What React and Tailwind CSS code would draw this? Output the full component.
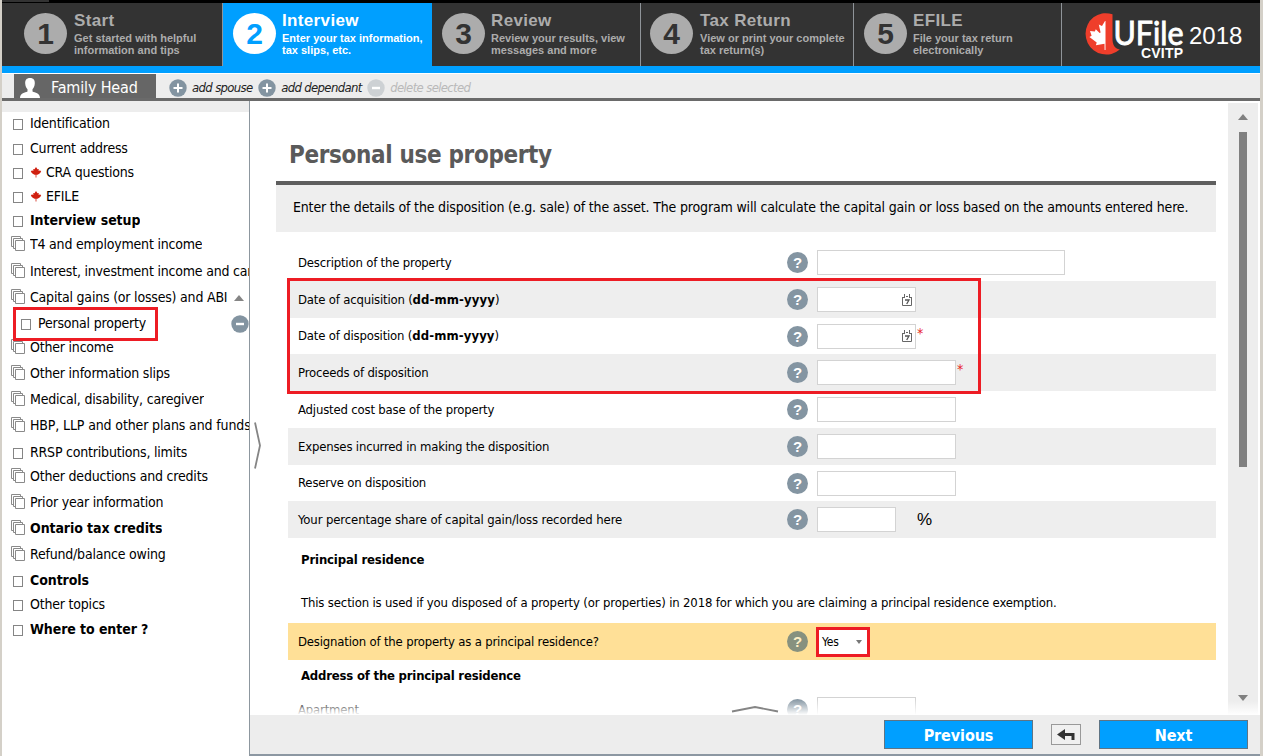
import React from "react";

const TAHOMA = "font-['DejaVu_Sans_Condensed','DejaVu_Sans',sans-serif] [font-stretch:condensed]";
const ARIAL = "font-['Liberation_Sans',Arial,sans-serif]";

const steps = [
  { n: "1", title: "Start", lines: ["Get started with helpful", "information and tips"], box: "w-[221px] pl-[22px] border-r border-[#8f9499]", gap: "ml-[7px]" },
  { n: "2", title: "Interview", lines: ["Enter your tax information,", "tax slips, etc."], box: "w-[209px] pl-[10px]", gap: "ml-[6px]", active: true },
  { n: "3", title: "Review", lines: ["Review your results, view", "messages and more"], box: "w-[209px] pl-[10px] border-r border-[#8f9499]", gap: "ml-[6px]" },
  { n: "4", title: "Tax Return", lines: ["View or print your complete", "tax return(s)"], box: "w-[213px] pl-[9px] border-r border-[#8f9499]", gap: "ml-[7px]" },
  { n: "5", title: "EFILE", lines: ["File your tax return", "electronically"], box: "w-[208px] pl-[10px] border-r border-[#8f9499]", gap: "ml-[6px]" },
];

function Step({ n, title, lines, box, gap, active }) {
  return (
    <div className={`flex h-[63px] shrink-0 ${box} ${active ? "bg-[#009fff] text-white" : "bg-[#333] text-[#acacac]"}`}>
      <div className={`mt-[10px] flex h-[41px] w-[43px] shrink-0 items-center justify-center rounded-[50%] text-[30px] leading-none font-bold ${active ? "bg-white text-[#009fff]" : "bg-[#acacac] text-[#333]"}`}>
        {n}
      </div>
      <div className={`pt-[8px] whitespace-nowrap font-bold ${gap}`}>
        <div className="text-[17px] leading-[20px] tracking-[0.35px]">{title}</div>
        <div className="pt-[1px] text-[11px] leading-[12px]">
          {lines.map((l) => <div key={l}>{l}</div>)}
        </div>
      </div>
    </div>
  );
}

function Logo() {
  return (
    <svg width="190" height="63" viewBox="1065 3 190 63" className="ml-[3px] block">
      <path d="M1112.500 14.200C1109 13 1105 13 1102 13.400A20.800 20.800 0 1 0 1119.800 49.600C1114.500 48.500 1112.500 44.500 1112.500 39Z" fill="#ef3e2b" />
      <path d="M1105 21l-3 5-3.200-1.400 1.800 7.800-1 .5-3.800-3.600-1 2.300-4.800-.7 1.600 4.800-2.200 1.300 7.300 5.600-.8 2.600 8.600-1.400.1 6.200h.9V21z" fill="#fff" />
      <text x="1113.500" y="44.500" fill="#fff" fontFamily="Lato, sans-serif" fontSize="33" fontWeight="400" stroke="#fff" strokeWidth="0.9" textLength="70" lengthAdjust="spacingAndGlyphs">UFile</text>
      <text x="1189" y="44" fill="#fff" fontFamily="Liberation Sans, Arial, sans-serif" fontSize="24">2018</text>
      <text x="1141" y="58" fill="#fff" fontFamily="Liberation Sans, Arial, sans-serif" fontSize="14" fontWeight="700" textLength="42">CVITP</text>
    </svg>
  );
}

function RoundIcon({ minus, muted }) {
  return (
    <svg width="18" height="18" viewBox="0 0 18 18" className="block shrink-0">
      <circle cx="9" cy="9" r="8.700" fill={muted ? "#cdd1d4" : "#8394a1"} />
      <path d={minus ? "M5 9h8" : "M4.500 9h9M9 4.500v9"} stroke="#fff" strokeWidth={minus ? 2.4 : 2} />
    </svg>
  );
}

function Leaf() {
  return (
    <svg width="12" height="11" viewBox="0 0 12 11" className="mr-[4px] block shrink-0">
      <path d="M6 0l1.500 2.300L8.800 2 8.500 3.800 10.300 3.400 11.200 4.800 9.300 6.800 7.500 7.800 6.400 7.800V10.500h-.8V7.800L4.500 7.800 2.700 6.800.8 4.800 1.700 3.400 3.500 3.800 3.200 2l1.300.3z" fill="#d02010" />
    </svg>
  );
}

function Page({ stack }) {
  return stack ? (
    <svg width="15" height="16" viewBox="0 0 15 16" className="block shrink-0">
      <g fill="#fff" stroke="#8a8a8a">
        <path d="M.5 .5h9v10h-9z" />
        <path d="M2.500 2.500h9v10h-9z" />
        <path d="M4.500 4.500h9v10h-9z" />
      </g>
    </svg>
  ) : (
    <span className="ml-[2px] block h-[11px] w-[10px] shrink-0 translate-y-px border border-[#858585] bg-white" />
  );
}

const nav = [
  { t: "Identification", h: "h-[25px]" },
  { t: "Current address", h: "h-[24px]" },
  { t: "CRA questions", h: "h-[24px]", leaf: true },
  { t: "EFILE", h: "h-[24px]", leaf: true },
  { t: "Interview setup", h: "h-[24px]", bold: true },
  { t: "T4 and employment income", h: "h-[27px]", stack: true },
  { t: "Interest, investment income and carrying charges", h: "h-[26px]", stack: true },
  { t: "Capital gains (or losses) and ABIL", h: "h-[26px]", stack: true, open: true },
  { t: "Personal property", h: "h-[24px]", child: true },
  { t: "Other income", h: "h-[26px]", stack: true },
  { t: "Other information slips", h: "h-[26px]", stack: true },
  { t: "Medical, disability, caregiver", h: "h-[26px]", stack: true },
  { t: "HBP, LLP and other plans and funds", h: "h-[27px]", stack: true, wide: true },
  { t: "RRSP contributions, limits", h: "h-[24px]" },
  { t: "Other deductions and credits", h: "h-[26px]", stack: true },
  { t: "Prior year information", h: "h-[26px]", stack: true },
  { t: "Ontario tax credits", h: "h-[26px]", stack: true, bold: true },
  { t: "Refund/balance owing", h: "h-[26px]", stack: true },
  { t: "Controls", h: "h-[24px]", bold: true },
  { t: "Other topics", h: "h-[25px]" },
  { t: "Where to enter ?", h: "h-[24px]", bold: true },
];

function NavItem({ t, h, bold, stack, leaf, open, child, wide }) {
  const tracking = bold ? "font-bold tracking-[-0.08px]" : wide ? "tracking-[-0.13px]" : "tracking-[-0.2px]";
  return (
    <li className={`relative ${h} ${child ? "pl-[17px]" : "pl-[9px]"}`}>
      <div className="flex h-[24px] items-center">
        <div className="w-[19px] shrink-0"><Page stack={stack} /></div>
        {leaf && <Leaf />}
        <span className={`block overflow-hidden text-[14px] leading-[22px] whitespace-nowrap ${open ? "w-[198px]" : ""} ${tracking}`}>{t}</span>
        {open && <span className="ml-[6px] shrink-0 translate-y-px border-x-[5px] border-b-[6px] border-x-transparent border-b-[#858585]" />}
        {child && <span className="mt-[2px] ml-auto"><RoundIcon minus /></span>}
      </div>
      {child && <div className="absolute -top-[4px] left-[11px] z-10 h-[34px] w-[145px] border-[3px] border-[#ed1c24]" />}
    </li>
  );
}

function Help({ tone }) {
  return (
    <span className={`flex size-[21px] shrink-0 items-center justify-center rounded-full font-['Liberation_Sans',sans-serif] text-[15px] leading-none font-bold ${tone || "bg-[#8495a2] text-white"}`}>?</span>
  );
}

function Calendar() {
  return (
    <svg width="10" height="12" viewBox="0 0 10 12" className="block">
      <path d="M.5 3v8.500h9V3M0 3.500h3M7 3.500h3M2.500 0v3M7.500 0v3M4 2.500h2" stroke="#666" fill="none" />
      <path d="M3 6h4L4.700 10" stroke="#555" strokeWidth="1.300" fill="none" />
    </svg>
  );
}

const D = () => <b className="tracking-[0.1px]">dd-mm-yyyy</b>;

const fields = [
  { label: "Description of the property", h: "h-[37px]", w: "w-[248px]" },
  { label: <>Date of acquisition (<D />)</>, h: "h-[37px]", w: "w-[99px]", cal: true, gray: true },
  { label: <>Date of disposition (<D />)</>, h: "h-[36px]", w: "w-[99px]", cal: true, star: true },
  { label: "Proceeds of disposition", h: "h-[37px]", w: "w-[139px]", gray: true, star: true },
  { label: "Adjusted cost base of the property", h: "h-[37px]", w: "w-[139px]" },
  { label: "Expenses incurred in making the disposition", h: "h-[37px]", w: "w-[139px]", gray: true },
  { label: "Reserve on disposition", h: "h-[36px]", w: "w-[139px]" },
  { label: "Your percentage share of capital gain/loss recorded here", h: "h-[37px]", w: "w-[79px]", gray: true, pct: true },
];

function Field({ label, h, w, cal, gray, star, pct }) {
  return (
    <div className={`flex items-center pl-[10px] ${h} ${gray ? "bg-[#eee]" : ""}`}>
      <div className={`w-[489px] shrink-0 text-[13px] whitespace-nowrap ${pct ? "tracking-[-0.11px]" : "tracking-[-0.18px]"}`}>{label}</div>
      <Help />
      <div className={`ml-[9px] flex h-[25px] shrink-0 items-center justify-end border border-[#d3d3d3] bg-white pr-[3px] ${w}`}>
        {cal && <Calendar />}
      </div>
      {star && <span className="ml-[1px] self-start pt-[8px] text-[14px] leading-none text-[#e8201c]">*</span>}
      {pct && <span className="ml-[21px] pt-px font-['Liberation_Sans',sans-serif] text-[17px]">%</span>}
    </div>
  );
}

function Action({ children, ...p }) {
  return (
    <div className="flex items-center">
      <RoundIcon {...p} />
      <span className={`ml-[5px] text-[13px] tracking-[-0.65px] whitespace-nowrap italic ${p.muted ? "text-[#b9b9b9]" : "text-[#222]"}`}>{children}</span>
    </div>
  );
}

export default function App() {
  return (
    <div className={`flex h-[756px] w-[1263px] flex-col overflow-hidden border-r-3 border-l-2 border-[#d4d0c8] bg-white text-black ${TAHOMA}`}>
      <div className="h-[3px] shrink-0 bg-black"><div className="h-[2px] w-[47px] bg-[#333]" /></div>
      <header className={`flex h-[70px] shrink-0 border-b-[7px] border-[#009fff] bg-[#333] ${ARIAL}`}>
        {steps.map((s) => <Step key={s.n} {...s} />)}
        <Logo />
      </header>

      <div className="flex h-[28px] shrink-0 border-t border-b-[3px] border-t-white border-b-[#6a6a6a] bg-[#ededed] pl-[12px]">
        <div className="flex w-[142px] items-center bg-[#666] text-white">
          <svg width="20" height="20" viewBox="0 0 20 20" className="mt-[3px] ml-[6px] block">
            <path d="M10 0c3.500 0 5 2.200 4.800 5.500-.2 2.800-1.200 4.600-2.300 5.700v2.300c2.500 1.200 7.300 1.500 7.500 6.500H0c.2-5 5-5.300 7.500-6.500v-2.300C6.400 10.100 5.400 8.300 5.200 5.500 5 2.200 6.500 0 10 0z" fill="#fff" />
          </svg>
          <span className="ml-[11px] pt-[3px] text-[16px] tracking-[-0.15px] whitespace-nowrap">Family Head</span>
        </div>
        <div className="ml-[13px] flex items-center gap-[5.5px] pt-[3px]">
          <Action>add spouse</Action>
          <Action>add dependant</Action>
          <Action minus muted>delete selected</Action>
        </div>
      </div>

      <div className="flex min-h-0 flex-1">
        <nav className="w-[248px] shrink-0 overflow-hidden border-r border-[#8d979f]">
          <div className="h-[11px] bg-[#ededed]" />
          <ul className="-mt-px">{nav.map((n) => <NavItem key={n.t} {...n} />)}</ul>
        </nav>

        <div className="flex min-w-0 flex-1 flex-col">
          <div className="flex h-[614px] shrink-0">
            <main className="relative h-[614px] w-[978px] shrink-0 overflow-hidden">
              <div className="ml-[26px] w-[940px]">
                <h1 className="h-[80px] pt-[38px] pl-[13px] text-[24px] leading-[32px] font-bold tracking-[-0.35px] text-[#5a5a5a]">Personal use property</h1>
                <div className="h-[51px] border-t-4 border-[#5e5e5e] bg-[#eee] pl-[17px] text-[14px] leading-[45px] tracking-[-0.165px] whitespace-nowrap">
                  Enter the details of the disposition (e.g. sale) of the asset. The program will calculate the capital gain or loss based on the amounts entered here.
                </div>
                <div className="relative mt-[12px] ml-[12px] text-[13px]">
                  {fields.map((f, i) => <Field key={i} {...f} />)}
                  <div className="absolute top-[34px] -left-px h-[116px] w-[694px] border-[3px] border-[#ed1c24]" />
                  <h2 className="h-[43px] pl-[13px] leading-[43px] font-bold tracking-[-0.15px]">Principal residence</h2>
                  <p className="h-[42px] pl-[13px] leading-[43px] tracking-[-0.15px] whitespace-nowrap">This section is used if you disposed of a property (or properties) in 2018 for which you are claiming a principal residence exemption.</p>
                  <div className="flex h-[37px] items-center bg-[#ffe097] pl-[10px]">
                    <div className="w-[489px] shrink-0 tracking-[-0.18px]">Designation of the property as a principal residence?</div>
                    <Help tone="bg-[#87917f] text-[#fdeec5]" />
                    <div className="ml-[8px] flex h-[30px] w-[54px] items-center border-[3px] border-[#ed1c24] bg-white pl-[3px] text-[12px] tracking-[-0.15px]">
                      Yes
                      <span className="ml-auto mr-[5px] border-x-[3px] border-t-[4px] border-x-transparent border-t-[#777]" />
                    </div>
                  </div>
                  <h2 className="h-[31px] pl-[13px] leading-[31px] font-bold tracking-[-0.2px]">Address of the principal residence</h2>
                  <Field label="Apartment" h="h-[37px]" w="w-[99px]" />
                </div>
              </div>
              <div className="absolute bottom-0 left-0 h-[16px] w-full bg-linear-to-b from-white/0 to-white" />
              <svg width="8" height="50" viewBox="0 0 8 50" className="absolute top-[320px] left-[4px]"><path d="M1 1.500L6 24.500L1 47.500" fill="none" stroke="#858585" strokeWidth="1.800" /></svg>
              <svg width="50" height="8" viewBox="0 0 50 8" className="absolute top-[604px] left-[480px]"><path d="M2 6.500L25 2L48 6.500" fill="none" stroke="#858585" strokeWidth="1.800" /></svg>
            </main>
            <div className="relative mt-[2px] flex w-[30px] shrink-0 flex-col items-center bg-[#ededed] pt-[11px]">
              <span className="border-x-[5px] border-b-[6px] border-x-transparent border-b-[#808080]" />
              <span className="mt-[12px] h-[335px] w-[8px] bg-[#808080]" />
              <span className="mt-[228px] border-x-[5px] border-t-[6px] border-x-transparent border-t-[#808080]" />
              <div className="absolute bottom-0 left-0 h-[14px] w-full bg-linear-to-b from-white/0 to-white" />
            </div>
          </div>
          <footer className="flex h-[41px] shrink-0 items-start border-b-2 border-[#8c97a2] bg-[#ededed] pt-[5px] pl-[634px] text-[16px] font-bold text-white">
            <button className="h-[29px] w-[149px] border border-[#5f7484] bg-[#009fff] pt-[2px] tracking-[-0.1px]">Previous</button>
            <button className="mt-[4px] ml-[18px] flex h-[21px] w-[30px] items-center justify-center border border-[#999] bg-[#f0f0f0]">
              <svg width="18" height="12" viewBox="0 0 18 12"><path d="M0 5.500L8 0v4h9.500v7h-3V7H8v4z" fill="#333" /></svg>
            </button>
            <button className="ml-[18px] h-[29px] w-[149px] border border-[#5f7484] bg-[#009fff] pt-[2px] tracking-[-0.1px]">Next</button>
          </footer>
        </div>
      </div>
    </div>
  );
}
